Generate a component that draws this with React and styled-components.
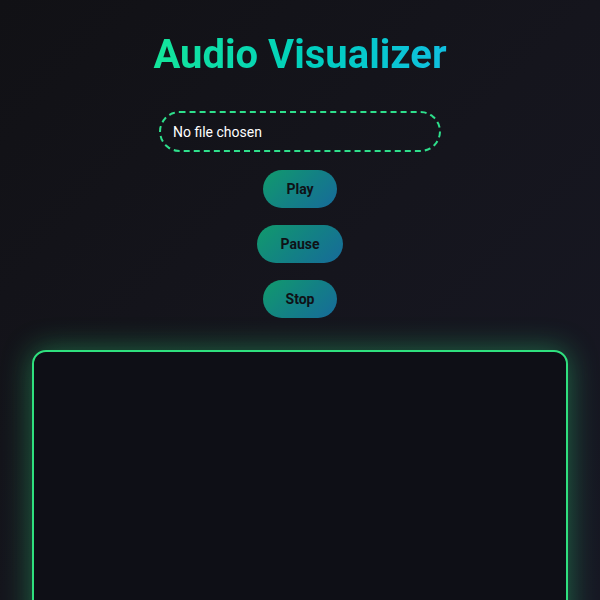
import React from 'react'
import styled, { createGlobalStyle } from 'styled-components'

const GlobalStyle = createGlobalStyle`
  html, body {
    margin: 0;
    padding: 0;
    min-height: 100%;
  }
  body {
    background: linear-gradient(135deg, #111115 0%, #15151d 50%, #171824 100%);
    font-family: Roboto, "Noto Sans", sans-serif;
    color: #ffffff;
    min-height: 600px;
    overflow: hidden;
  }
`

function App() {
  return (
    <>
      <GlobalStyle />
      <Page>
        <Title>Audio Visualizer</Title>
        <FileBox>
          <FileText>No file chosen</FileText>
        </FileBox>
        <Controls>
          <Btn>Play</Btn>
          <Btn>Pause</Btn>
          <Btn>Stop</Btn>
        </Controls>
        <Canvas />
      </Page>
    </>
  )
}

export default App

const Page = styled.div`
  display: flex;
  flex-direction: column;
  align-items: center;
  padding-top: 31px;
  width: 600px;
  height: 600px;
  box-sizing: border-box;
  overflow: hidden;
  & > * {
    flex-shrink: 0;
  }
`
const Title = styled.h1`
  margin: 0;
  font-size: 40px;
  font-weight: 700;
  line-height: 47px;
  background: linear-gradient(90deg, #14e59a 0%, #00cfc0 55%, #10bfe0 100%);
  -webkit-background-clip: text;
  background-clip: text;
  color: transparent;
`
const FileBox = styled.div`
  margin-top: 33px;
  width: 282px;
  height: 41px;
  box-sizing: border-box;
  border: 2px dashed #2ee08c;
  border-radius: 21px;
  display: flex;
  align-items: center;
  padding: 0 12px;
`
const FileText = styled.span`
  font-size: 14px;
  color: #ffffff;
`
const Controls = styled.div`
  margin-top: 18px;
  display: flex;
  flex-direction: column;
  align-items: center;
  gap: 17px;
`
const Btn = styled.div`
  height: 38px;
  box-sizing: border-box;
  padding: 0 23px;
  display: flex;
  align-items: center;
  justify-content: center;
  border-radius: 19px;
  background: linear-gradient(135deg, #119a6c 0%, #137f86 55%, #176a9a 100%);
  color: #0f1116;
  font-size: 14px;
  font-weight: 700;
`
const Canvas = styled.div`
  margin-top: 32px;
  width: 536px;
  height: 300px;
  box-sizing: border-box;
  border: 2px solid #2fe07e;
  border-radius: 14px;
  background: #0e0f16;
  box-shadow: 0 0 30px rgba(46, 224, 126, 0.42);
`
